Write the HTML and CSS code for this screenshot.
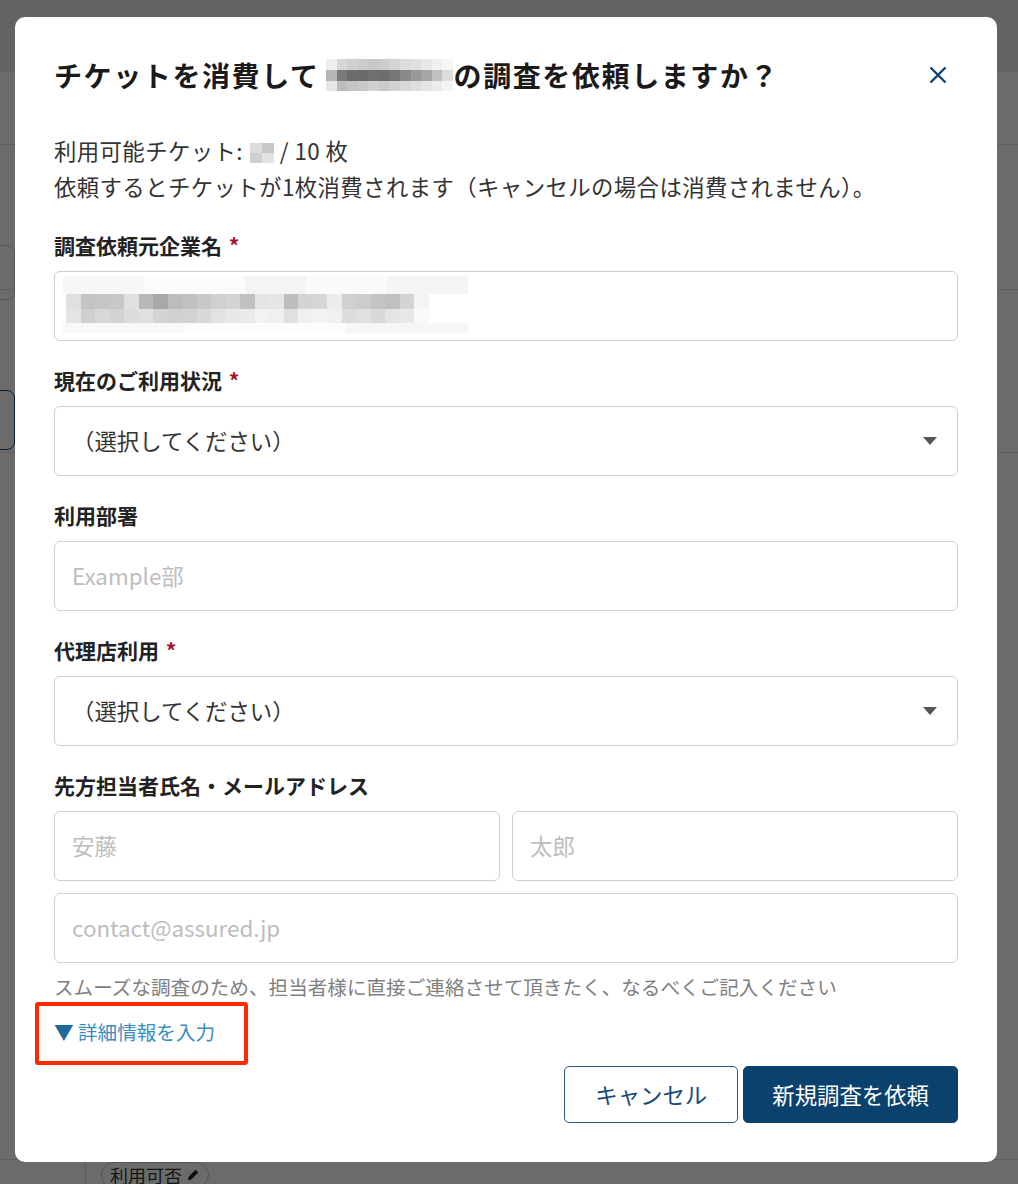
FILE: index.html
```html
<!DOCTYPE html>
<html lang="ja">
<head>
    <meta charset="UTF-8">
    <meta name="viewport" content="width=device-width, initial-scale=1.0">
    <title>新規調査を依頼</title>
    <link rel="stylesheet" href="styles.css">
</head>
<body>
    <!-- 背景の一覧ページ -->
    <div class="page">
        <div class="page-header"></div>
        <div class="page-row row-a"></div>
        <div class="page-row row-b"><div class="ghost-btn"></div></div>
        <div class="page-row row-c"><div class="ghost-btn ghost-blue"></div></div>
        <div class="page-row row-d"></div>
        <div class="page-foot">
            <span class="pill">利用可否
                <svg class="pencil" viewBox="0 0 16 16" width="14" height="14"><path d="M2 14l1-4 8-8 3 3-8 8z" fill="#222"/></svg>
            </span>
        </div>
    </div>

    <!-- モーダル -->
    <div class="overlay">
        <div class="modal">
            <div class="modal-head">
                <h2 class="modal-title">チケットを消費して<span class="blur blur-title"></span>の調査を依頼しますか？</h2>
                <button class="close-btn" type="button">
                    <svg viewBox="0 0 20 20" width="20" height="20"><path d="M2.5 2.5L17.5 17.5M17.5 2.5L2.5 17.5" stroke="#0d4475" stroke-width="2.4" fill="none"/></svg>
                </button>
            </div>

            <p class="intro">利用可能チケット: <span class="blur blur-count"></span> / 10 枚<br>依頼するとチケットが1枚消費されます（キャンセルの場合は消費されません）。</p>

            <div class="field">
                <label class="field-label">調査依頼元企業名 <span class="req">*</span></label>
                <div class="input input-filled"><span class="blur blur-company"></span></div>
            </div>

            <div class="field">
                <label class="field-label">現在のご利用状況 <span class="req">*</span></label>
                <div class="select-wrap">
                    <select class="input select">
                        <option>（選択してください）</option>
                    </select>
                </div>
            </div>

            <div class="field">
                <label class="field-label">利用部署</label>
                <input class="input" type="text" placeholder="Example部">
            </div>

            <div class="field">
                <label class="field-label">代理店利用 <span class="req">*</span></label>
                <div class="select-wrap">
                    <select class="input select">
                        <option>（選択してください）</option>
                    </select>
                </div>
            </div>

            <div class="field field-last">
                <label class="field-label">先方担当者氏名・メールアドレス</label>
                <div class="name-row">
                    <input class="input" type="text" placeholder="安藤">
                    <input class="input" type="text" placeholder="太郎">
                </div>
                <input class="input email" type="email" placeholder="contact@assured.jp">
                <p class="hint">スムーズな調査のため、担当者様に直接ご連絡させて頂きたく、なるべくご記入ください</p>
            </div>

            <div class="details">
                <a class="details-link" href="#"><span class="tri">▼</span> 詳細情報を入力</a>
                <span class="mark"></span>
            </div>

            <div class="actions">
                <button class="btn btn-cancel" type="button">キャンセル</button>
                <button class="btn btn-submit" type="button">新規調査を依頼</button>
            </div>
        </div>
    </div>
</body>
</html>
```

FILE: styles.css
```css
* {
    box-sizing: border-box;
}
html, body {
    margin: 0;
}
body {
    font-family: "Noto Sans CJK JP", "Noto Sans", sans-serif;
    color: #333;
    background: #fff;
    height: 1184px;
    overflow: hidden;
}

/* 背景ページ */
.page {
    height: 1184px;
}
.page-header {
    height: 72px;
    background: #ebebeb;
}
.page-row {
    border-bottom: 1px solid #e2e2e2;
}
.row-a {
    height: 73px;
}
.row-b {
    height: 145px;
    padding-top: 100px;
}
.row-c {
    height: 163px;
    padding-top: 100px;
}
.row-d {
    height: 707px;
}
.ghost-btn {
    width: 60px;
    height: 55px;
    margin-left: -45px;
    border: 1px solid #cfcfcf;
    border-radius: 8px;
}
.ghost-blue {
    height: 60px;
    border-color: #1c4b78;
}
.page-foot {
    margin-left: 85px;
    border-left: 1px solid #d8d8d8;
    padding: 2px 0 0 15px;
    height: 24px;
}
.pill {
    display: inline-flex;
    align-items: center;
    gap: 4px;
    padding: 0 8px;
    border: 1px solid #ccc;
    border-radius: 14px;
    font-size: 18px;
    line-height: 24px;
}

/* オーバーレイ */
.overlay {
    position: fixed;
    inset: 0;
    background: rgba(0, 0, 0, 0.58);
    padding: 17px 0 0 15px;
}
.modal {
    width: 982px;
    background: #fff;
    border-radius: 10px;
    padding: 38px 39px 39px 39px;
}
.modal-head {
    display: flex;
    justify-content: space-between;
    align-items: center;
}
.modal-title {
    margin: 0;
    font-size: 28px;
    line-height: 40px;
    font-weight: 700;
    letter-spacing: 1.6px;
    color: #1a1a1a;
}
.close-btn {
    width: 40px;
    height: 40px;
    padding: 0;
    border: none;
    background: none;
    display: flex;
    align-items: center;
    justify-content: center;
}

.intro {
    margin: 37px 0 28px;
    font-size: 22.4px;
    line-height: 36px;
    letter-spacing: 0.4px;
    color: #333;
}

/* ぼかし（モザイク） */
.blur {
    display: inline-block;
    background-repeat: no-repeat;
}
.blur-title {
    width: 127px;
    height: 32px;
    margin: 0 1px 0 6px;
    vertical-align: -4px;
    background-size: 100% 11px, 100% 11px, 100% 10px;
    background-position: 0 0, 0 11px, 0 22px;
    background-image:
        linear-gradient(to right, #eee 0 8.3%, #d8d8d8 8.3% 16.6%, #d0d0d0 16.6% 25%, #ccc 25% 33.3%, #c8c8c8 33.3% 41.6%, #ccc 41.6% 50%, #d4d4d4 50% 58.3%, #ddd 58.3% 66.6%, #e0e0e0 66.6% 75%, #e8e8e8 75% 83.3%, #f0f0f0 83.3% 91.6%, #f6f6f6 91.6% 100%),
        linear-gradient(to right, #b5b5b5 0 8.3%, #7a7a7a 8.3% 16.6%, #6c6c6c 16.6% 25%, #6a6a6a 25% 33.3%, #707070 33.3% 41.6%, #6e6e6e 41.6% 50%, #767676 50% 58.3%, #8a8a8a 58.3% 66.6%, #999 66.6% 75%, #a6a6a6 75% 83.3%, #c0c0c0 83.3% 91.6%, #ddd 91.6% 100%),
        linear-gradient(to right, #e6e6e6 0 8.3%, #bdbdbd 8.3% 16.6%, #c4c4c4 16.6% 25%, #c8c8c8 25% 33.3%, #cfcfcf 33.3% 41.6%, #cacaca 41.6% 50%, #d2d2d2 50% 58.3%, #d8d8d8 58.3% 66.6%, #dedede 66.6% 75%, #e4e4e4 75% 83.3%, #ececec 83.3% 91.6%, #f4f4f4 91.6% 100%);
}
.blur-count {
    width: 24px;
    height: 20px;
    margin-left: 2px;
    vertical-align: -3px;
    background-size: 100% 10px, 100% 10px;
    background-position: 0 0, 0 10px;
    background-image:
        linear-gradient(to right, #ddd 0 50%, #c8c8c8 50% 100%),
        linear-gradient(to right, #cfcfcf 0 50%, #e2e2e2 50% 100%);
}
.blur-company {
    display: block;
    width: 405px;
    height: 58px;
    margin: 4px 0 0 -9px;
    background-size: 405px 18px, 363px 15px, 363px 14px, 405px 10px;
    background-position: 0 0, 3px 18px, 3px 33px, 0 47px;
    background-image:
        linear-gradient(to right, #f7f7f7 0 20%, #fbfbfb 20% 45%, #f4f4f4 45% 60%, #fafafa 60% 80%, #f5f5f5 80% 100%),
        linear-gradient(to right, #e0e0e0 0 4%, #c4c4c4 4% 8%, #c6c6c6 8% 12%, #c8c8c8 12% 16%, #e0e0e0 16% 20%, #b8b8b8 20% 24%, #a8a8a8 24% 28%, #bcbcbc 28% 32%, #c0c0c0 32% 36%, #c8c8c8 36% 40%, #d0d0d0 40% 44%, #d4d4d4 44% 48%, #c0c0c0 48% 52%, #e4e4e4 52% 56%, #e6e6e6 56% 60%, #bdbdbd 60% 64%, #d4d4d4 64% 68%, #d6d6d6 68% 72%, #ececec 72% 76%, #d0d0d0 76% 80%, #ccc 80% 84%, #c4c4c4 84% 88%, #c0c0c0 88% 92%, #d4d4d4 92% 96%, #f4f4f4 96% 100%),
        linear-gradient(to right, #e4e4e4 0 4%, #cfcfcf 4% 8%, #d8d8d8 8% 12%, #d2d2d2 12% 16%, #dcdcdc 16% 20%, #e0e0e0 20% 24%, #d4d4d4 24% 28%, #d0d0d0 28% 32%, #d2d2d2 32% 36%, #d8d8d8 36% 40%, #e2e2e2 40% 44%, #e8e8e8 44% 48%, #eaeaea 48% 52%, #f2f2f2 52% 56%, #f0f0f0 56% 60%, #e0e0e0 60% 64%, #f0f0f0 64% 68%, #f4f4f4 68% 72%, #f0f0f0 72% 76%, #dcdcdc 76% 80%, #e0e0e0 80% 84%, #d8d8d8 84% 88%, #e4e4e4 88% 92%, #e8e8e8 92% 96%, #fafafa 96% 100%),
        linear-gradient(to right, #f8f8f8 0 30%, #fcfcfc 30% 70%, #f6f6f6 70% 100%);
}

/* フォーム */
.field {
    margin-bottom: 26px;
}
.field-label {
    display: block;
    font-size: 21px;
    line-height: 26px;
    font-weight: 700;
    color: #222;
    margin-bottom: 13px;
}
.req {
    color: #a3162b;
    margin-left: 2px;
}
.input {
    display: block;
    width: 100%;
    height: 70px;
    padding: 0 17px 3px;
    border: 1px solid #cfcfcf;
    border-radius: 6px;
    background: #fff;
    font-family: inherit;
    font-size: 22.4px;
    color: #333;
    outline: none;
}
.input::placeholder {
    color: #bdbdbd;
}
.input-filled {
    padding: 0 17px;
}
.select-wrap {
    position: relative;
}
.select {
    appearance: none;
    -webkit-appearance: none;
    padding-right: 50px;
}
.select-wrap::after {
    content: "";
    position: absolute;
    right: 21px;
    top: 50%;
    margin-top: -4px;
    border-left: 7.5px solid transparent;
    border-right: 7.5px solid transparent;
    border-top: 8px solid #555;
}
.name-row {
    display: grid;
    grid-template-columns: 1fr 1fr;
    gap: 12px;
}
.email {
    margin-top: 12px;
}
.field-last {
    margin-bottom: 0;
}
.hint {
    margin: 10px 0 0;
    font-size: 19.6px;
    line-height: 28px;
    color: #808080;
}

.details {
    position: relative;
    margin-top: 17px;
    height: 28px;
}
.details-link {
    font-size: 19.6px;
    line-height: 28px;
    color: #3a8dbf;
    text-decoration: none;
}
.tri {
    color: #1f6a99;
}
/* 注記用の赤枠 */
.mark {
    position: absolute;
    left: -19px;
    top: -16px;
    width: 213px;
    height: 63px;
    border: 4px solid #ff2a00;
    border-radius: 3px;
}

.actions {
    display: flex;
    justify-content: flex-end;
    gap: 5px;
    margin-top: 20px;
}
.btn {
    height: 57px;
    padding-bottom: 3px;
    border-radius: 5px;
    font-family: inherit;
    font-size: 22.4px;
    cursor: pointer;
}
.btn-cancel {
    padding-left: 30px;
    padding-right: 30px;
    background: #fff;
    border: 1px solid #2b5c88;
    color: #174a78;
}
.btn-submit {
    padding-left: 28px;
    padding-right: 28px;
    background: #0a416d;
    border: 1px solid #0a416d;
    color: #fff;
}
```
